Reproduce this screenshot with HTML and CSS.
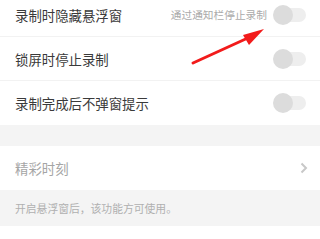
FILE: index.html
```html
<!DOCTYPE html>
<html lang="zh-CN">
<head>
    <meta charset="UTF-8">
    <meta name="viewport" content="width=device-width, initial-scale=1.0">
    <title>录制设置</title>
    <link rel="stylesheet" href="styles.css">
</head>
<body>
    <div class="page">
        <div class="group">
            <div class="row">
                <span class="label">录制时隐藏悬浮窗</span>
                <span class="hint">通过通知栏停止录制</span>
                <span class="switch"></span>
            </div>
            <div class="row">
                <span class="label">锁屏时停止录制</span>
                <span class="switch"></span>
            </div>
            <div class="row">
                <span class="label">录制完成后不弹窗提示</span>
                <span class="switch"></span>
            </div>
        </div>
        <div class="gap"></div>
        <div class="group">
            <div class="row disabled">
                <span class="label">精彩时刻</span>
                <svg class="chevron" width="8" height="12" viewBox="0 0 8 12">
                    <path d="M1.5 1.5 L6 6 L1.5 10.5" fill="none" stroke="#c8c8c8" stroke-width="2"/>
                </svg>
            </div>
        </div>
        <div class="note">开启悬浮窗后，该功能方可使用。</div>
        <div class="group tail"></div>
    </div>

    <!-- 标注箭头 -->
    <svg class="arrow" width="320" height="239" viewBox="0 0 320 239">
        <line x1="193" y1="63" x2="250" y2="37" stroke="#f21b1b" stroke-width="3" stroke-linecap="round"/>
        <polygon points="264,29 243,35 249,45" fill="#f21b1b"/>
    </svg>
</body>
</html>
```

FILE: styles.css
```css
body {
    margin: 0;
    padding: 0;
    overflow: hidden;
    background-color: #f4f4f4;
    font-family: "Noto Sans CJK SC", "Noto Sans", sans-serif;
}

.page {
    margin-top: -7px;
}

.group {
    background-color: #fff;
}

.row {
    height: 44px;
    display: flex;
    align-items: center;
    padding: 0 14px 0 15px;
    border-bottom: 1px solid #f2f2f2;
    box-sizing: border-box;
}

.row:last-child {
    border-bottom: none;
}

.label {
    flex: 1;
    font-size: 13.4px;
    color: #3a3a3a;
}

.hint {
    font-size: 10.7px;
    color: #aaa;
    margin-right: 7px;
}

.switch {
    position: relative;
    width: 32px;
    height: 14px;
    border-radius: 7px;
    background-color: #eee;
}

.switch::before {
    content: "";
    position: absolute;
    left: -1px;
    top: -3px;
    width: 20px;
    height: 20px;
    border-radius: 50%;
    background-color: #dcdcdc;
}

.gap {
    height: 21px;
}

.disabled .label {
    color: #a5a5a5;
}

.chevron {
    margin-right: -2px;
}

.note {
    height: 36px;
    display: flex;
    align-items: center;
    padding-left: 15px;
    font-size: 10.8px;
    color: #b0b0b0;
}

.tail {
    height: 14px;
}

.arrow {
    position: absolute;
    left: 0;
    top: 0;
}
```
